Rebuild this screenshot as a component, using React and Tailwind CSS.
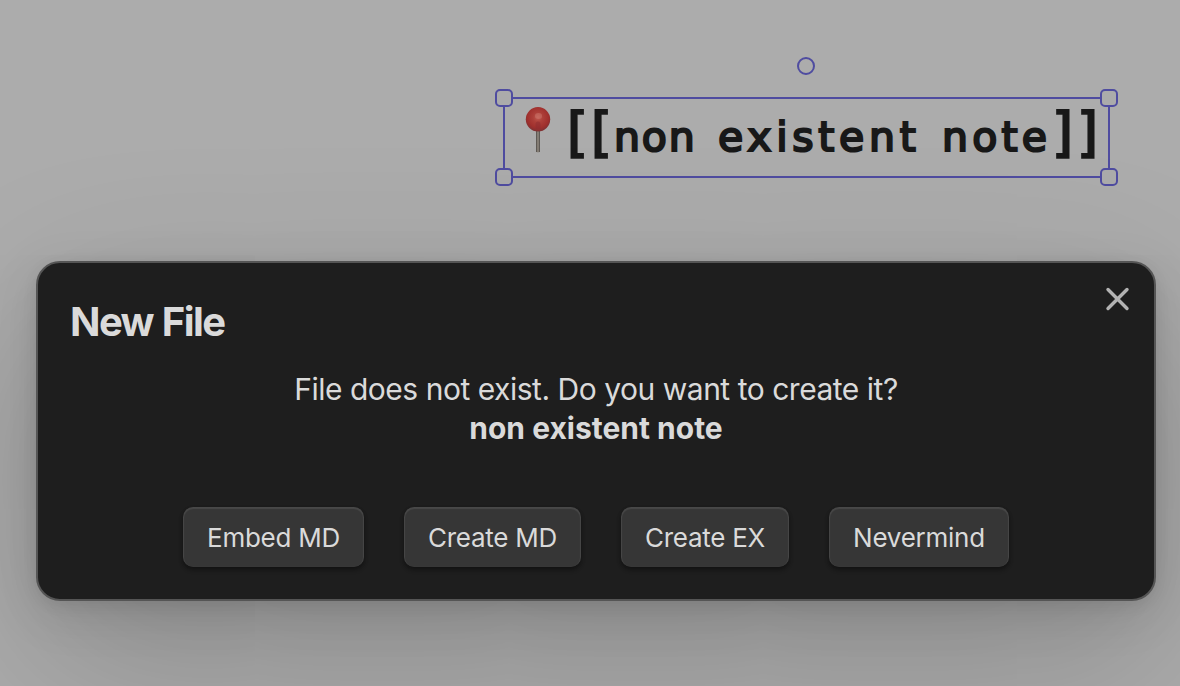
function Handle({ className }) {
  return (
    <span
      className={`absolute h-[18px] w-[18px] rounded-[5px] border-2 border-[#4f4ca0] bg-[#ababab] ${className}`}
    />
  );
}

function Pushpin() {
  return (
    <svg width="28" height="48" viewBox="0 0 28 48" className="mt-[7px] shrink-0 self-start">
      <defs>
        <radialGradient id="pin-head" cx="0.5" cy="0.42" r="0.58">
          <stop offset="0" stopColor="#c25a50" />
          <stop offset="0.35" stopColor="#ad3f39" />
          <stop offset="0.75" stopColor="#a0302d" />
          <stop offset="1" stopColor="#7d3032" />
        </radialGradient>
        <linearGradient id="pin-needle" x1="0" x2="1" y1="0" y2="0">
          <stop offset="0" stopColor="#4c4844" />
          <stop offset="0.5" stopColor="#968e84" />
          <stop offset="1" stopColor="#4b4744" />
        </linearGradient>
      </defs>
      <path d="M12 23h4v22.2l-1 1h-2l-1-1z" fill="url(#pin-needle)" />
      <circle cx="14" cy="13.3" r="12.2" fill="url(#pin-head)" />
      <ellipse cx="14.5" cy="10" rx="3.6" ry="3" fill="#d08378" opacity="0.4" />
      <path d="M11.5 18c0-3.4 5-3.4 5 0v5h-5z" fill="#8c2c30" opacity="0.5" />
    </svg>
  );
}

function SelectedText() {
  return (
    <div className="relative ml-[503px] mt-[97px] h-[81px] w-[607px] shrink-0 border-2 border-[#4f4ca0]">
      <span className="absolute left-[292px] top-[-42px] h-[18px] w-[18px] rounded-full border-2 border-[#4f4ca0]" />
      <Handle className="left-[-10px] top-[-10px]" />
      <Handle className="right-[-10px] top-[-10px]" />
      <Handle className="bottom-[-10px] left-[-10px]" />
      <Handle className="bottom-[-10px] right-[-10px]" />
      <div className="flex h-full items-start pl-[19px] font-['DejaVu_Sans',sans-serif] text-[41px] leading-[68px] whitespace-pre text-[#181818] [-webkit-text-stroke:2.2px_#181818]">
        <Pushpin />
        <p className="ml-[15px] flex items-baseline">
          <span className="w-[47px] text-[54px] tracking-[3px]">[[</span>
          <span className="w-[104px] tracking-[1.8px]">non </span>
          <span className="w-[224px] tracking-[4.7px]">existent </span>
          <span className="w-[110px] tracking-[4.2px]">note</span>
          <span className="text-[54px] tracking-[4px]">]]</span>
        </p>
      </div>
    </div>
  );
}

function ModalButton({ className, children }) {
  return (
    <button
      className={`h-[60px] rounded-[10px] bg-[#363636] pt-px text-center text-[26px] leading-[60px] tracking-[-0.25px] whitespace-nowrap text-[#dadada] shadow-[inset_0_1px_1px_1px_rgba(255,255,255,0.09),0_2px_4px_rgba(0,0,0,0.15),0_2px_3px_rgba(0,0,0,0.1),0_3px_5px_rgba(0,0,0,0.2)] ${className}`}
    >
      {children}
    </button>
  );
}

function NewFileModal() {
  return (
    <section className="relative ml-9 mt-[83px] flex h-[340px] w-[1120px] shrink-0 flex-col rounded-[24px] border-2 border-[#555555] bg-[#1e1e1e] px-8 text-[#dadada] shadow-[0_4px_15px_rgba(0,0,0,0.071),0_13px_49px_rgba(0,0,0,0.112),0_60px_180px_rgba(0,0,0,0.2)]">
      <button aria-label="Close" className="absolute right-[23px] top-[23px] h-[26px] w-[26px]">
        <svg viewBox="0 0 26 26" className="h-full w-full" fill="none" stroke="#b3b3b3" strokeWidth="3.4" strokeLinecap="round">
          <path d="M3 3.5l19 19M22 3.5l-19 19" />
        </svg>
      </button>
      <h1 className="mt-[34px] text-[40px] leading-[50px] font-bold tracking-[-1.6px] [word-spacing:1px]">New File</h1>
      <div className="mt-[23px] text-center text-[30px] leading-[39px]">
        <p className="tracking-[-0.48px]">File does not exist. Do you want to create it?</p>
        <p className="font-bold">non existent note</p>
      </div>
      <div className="mt-[59px] flex justify-center gap-10">
        <ModalButton className="w-[181px]">Embed MD</ModalButton>
        <ModalButton className="w-[177px]">Create MD</ModalButton>
        <ModalButton className="w-[168px]">Create EX</ModalButton>
        <ModalButton className="w-[180px]">Nevermind</ModalButton>
      </div>
    </section>
  );
}

export default function App() {
  return (
    <main className="flex h-[686px] w-[1180px] flex-col overflow-hidden bg-[#acacac] font-['Inter',sans-serif]">
      <SelectedText />
      <NewFileModal />
    </main>
  );
}
